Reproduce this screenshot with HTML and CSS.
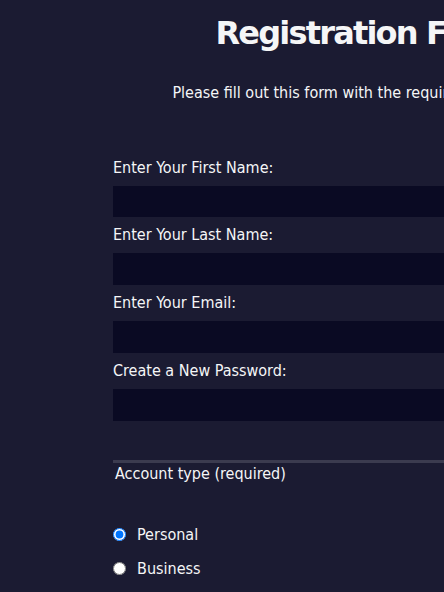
FILE: index.html
```html
<!DOCTYPE html>
<html lang="en">
<head>
<meta charset="utf-8">
<title>Registration Form</title>
<link rel="stylesheet" href="styles.css">
</head>
<body>
<div class="page">
  <h1 class="title">Registration Form</h1>
  <p class="intro">Please fill out this form with the required information</p>
  <form class="form">
    <div class="section section-details">
      <label class="field">
        <span class="field-label">Enter Your First Name:</span>
        <input class="text-input" type="text">
      </label>
      <label class="field">
        <span class="field-label">Enter Your Last Name:</span>
        <input class="text-input" type="text">
      </label>
      <label class="field">
        <span class="field-label">Enter Your Email:</span>
        <input class="text-input" type="email">
      </label>
      <label class="field">
        <span class="field-label">Create a New Password:</span>
        <input class="text-input" type="password">
      </label>
    </div>
    <div class="section section-account">
      <div class="legend">Account type (required)</div>
      <div class="radio-list">
        <label class="radio-label"><input class="radio" type="radio" name="account-type" checked><span>Personal</span></label>
        <label class="radio-label"><input class="radio" type="radio" name="account-type"><span>Business</span></label>
      </div>
    </div>
  </form>
</div>
</body>
</html>
```

FILE: styles.css
```css
html, body {
  margin: 0;
  padding: 0;
  overflow: hidden;
}

body {
  background-color: #1b1b32;
  color: #f5f6f7;
  font-family: "DejaVu Sans Condensed", "DejaVu Sans", sans-serif;
  font-size: 16px;
}

.page {
  width: 726px;
  padding-top: 15px;
}

.title {
  margin: 0;
  font-family: "DejaVu Sans", sans-serif;
  font-size: 32px;
  line-height: 37px;
  font-weight: bold;
  letter-spacing: -1.8px;
  text-align: center;
}

.intro {
  margin: 30.5px 0 0;
  text-align: center;
  line-height: normal;
}

.form {
  width: 500px;
  margin: 56px auto 0;
}

.section-details {
  display: flex;
  flex-direction: column;
  gap: 8.4px;
  padding-bottom: 39.6px;
  border-bottom: 3px solid #3b3b4f;
}

.field {
  display: flex;
  flex-direction: column;
}

.field-label {
  line-height: normal;
}

.text-input {
  box-sizing: border-box;
  margin: 9px 0 0;
  width: 100%;
  height: 31.5px;
  background-color: #0a0a23;
  border: 1px solid #0a0a23;
  color: #ffffff;
  padding: 0 4px;
  font: inherit;
}

.legend {
  margin-top: 1px;
  padding: 0 2px;
  line-height: normal;
}

.radio-list {
  display: flex;
  flex-direction: column;
  gap: 15px;
  margin-top: 42px;
}

.radio-label {
  display: flex;
  align-items: center;
  gap: 11px;
  height: 19px;
  line-height: 19px;
}

.radio {
  margin: 0;
  width: 13px;
  height: 13px;
}
```
